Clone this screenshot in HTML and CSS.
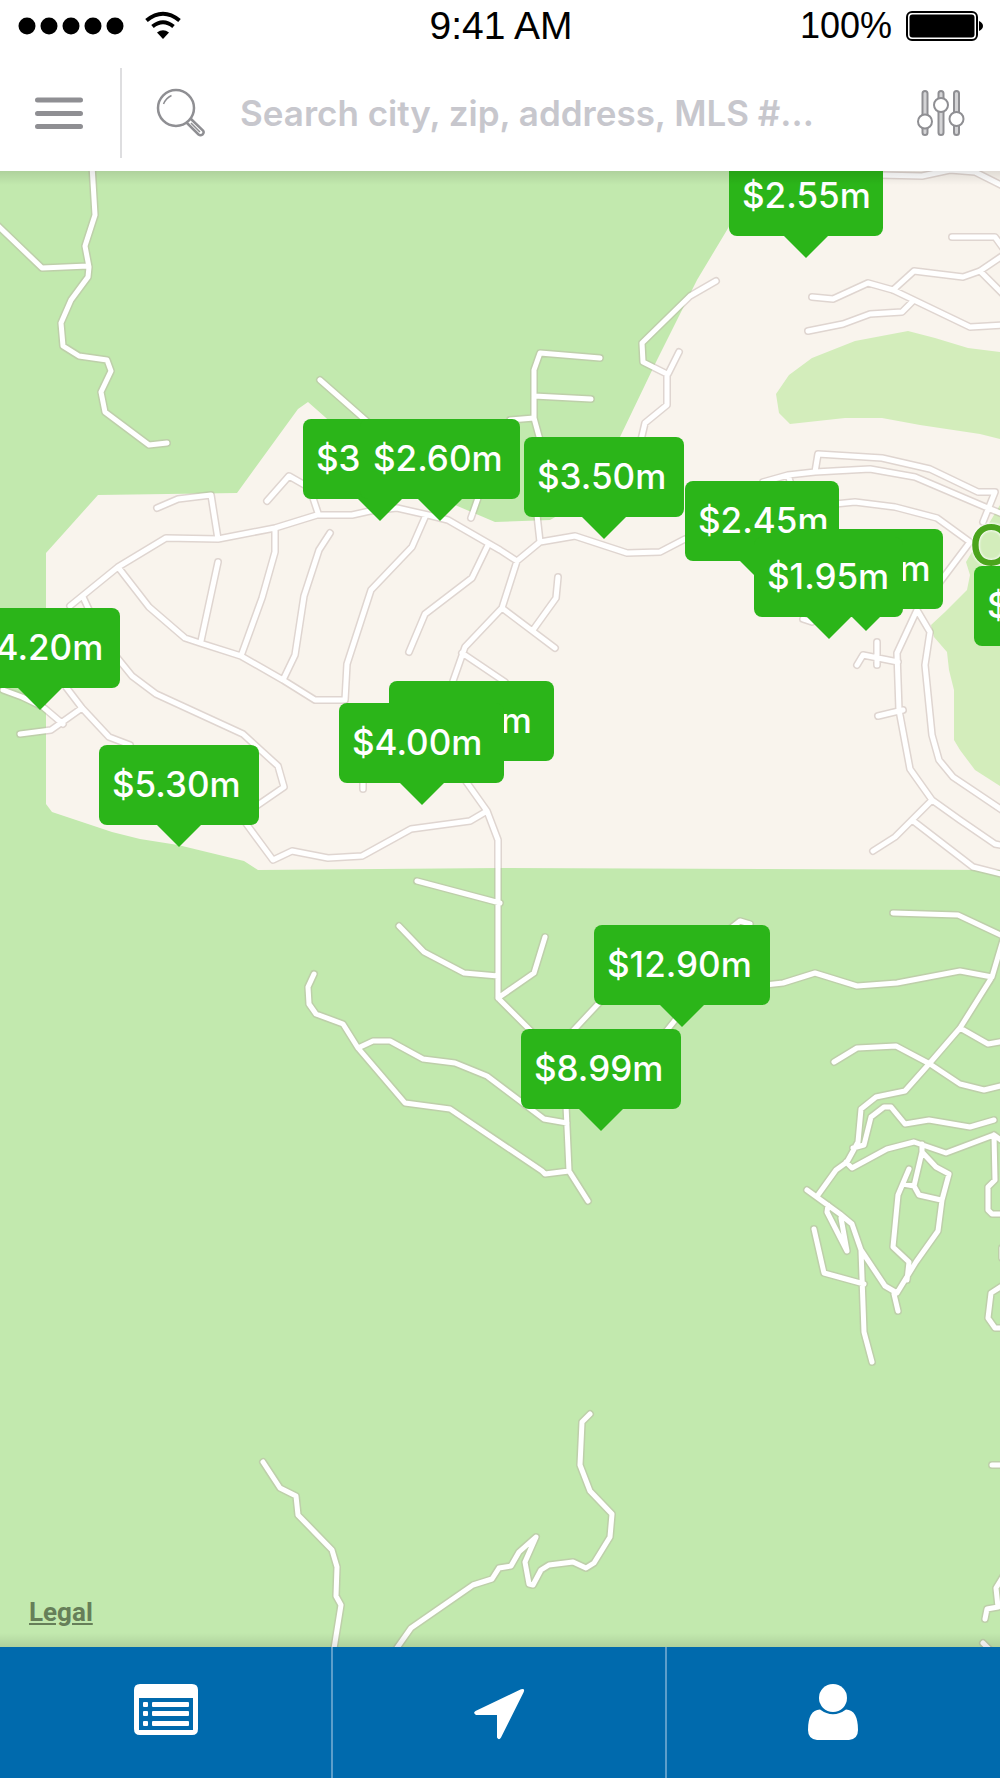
FILE: index.html
```html
<!DOCTYPE html>
<html lang="en">
<head>
    <meta charset="UTF-8">
    <meta name="viewport" content="width=device-width, initial-scale=1.0">
    <title>Map Search</title>
    <link rel="stylesheet" href="styles.css">
</head>
<body>
    <header class="header">
        <!-- Status Bar -->
        <div class="status">
            <div class="status-left">
                <svg width="106" height="18" viewBox="0 0 106 18">
                    <circle cx="9" cy="9" r="8.5"/>
                    <circle cx="31" cy="9" r="8.5"/>
                    <circle cx="53" cy="9" r="8.5"/>
                    <circle cx="75" cy="9" r="8.5"/>
                    <circle cx="97" cy="9" r="8.5"/>
                </svg>
                <svg width="38" height="30" viewBox="0 0 38 30">
                    <path d="M2.500 9.500Q19 -4 35.500 9.500" fill="none" stroke="#000" stroke-width="4"/>
                    <path d="M8.500 15.500Q19 7 29.500 15.500" fill="none" stroke="#000" stroke-width="4"/>
                    <path d="M13 21.500Q19 17 25 21.500L19 28Z"/>
                </svg>
            </div>
            <div class="time">9:41 AM</div>
            <div class="status-right">
                <span>100%</span>
                <svg width="78" height="30" viewBox="0 0 78 30">
                    <rect x="1" y="1" width="70" height="28" rx="5" fill="none" stroke="#000" stroke-width="2"/>
                    <rect x="3.500" y="3.500" width="65" height="23" rx="3"/>
                    <path d="M73 10Q77 12 77 15T73 20Z"/>
                </svg>
            </div>
        </div>

        <!-- Search Bar -->
        <form class="search">
            <button type="button" class="menu" aria-label="Menu">
                <svg width="48" height="32" viewBox="0 0 48 32">
                    <path d="M2.500 3H45.500M2.500 16.500H45.500M2.500 29.500H45.500" stroke="#8f8f93" stroke-width="5" stroke-linecap="round"/>
                </svg>
            </button>
            <label for="searchInput" class="search-label" aria-label="Search">
                <svg width="50" height="50" viewBox="0 0 50 50" fill="none" stroke="#8f8f93" stroke-width="2.500">
                    <circle cx="20" cy="20" r="18"/>
                    <path d="M7.500 16Q10 10 15.500 7.500" stroke-width="1.500"/>
                    <path d="M30.500 34.500L42.500 46.500Q44.500 48 46.500 46.500Q48.500 44.500 47 42.500L35 31"/>
                    <path d="M35 35L44 44" stroke-width="1.500"/>
                </svg>
            </label>
            <input type="text" id="searchInput" name="q" placeholder="Search city, zip, address, MLS #...">
            <button type="button" class="filter" aria-label="Filters">
                <svg width="50" height="48" viewBox="0 0 50 48" fill="#d4d4d6" stroke="#8f8f93" stroke-width="2">
                    <rect x="6.500" y="2" width="5" height="44" rx="2.500"/>
                    <rect x="22.500" y="2" width="5" height="44" rx="2.500"/>
                    <rect x="38" y="2" width="5" height="44" rx="2.500"/>
                    <g fill="#fff">
                        <circle cx="9" cy="32.500" r="7"/>
                        <circle cx="25" cy="16" r="7"/>
                        <circle cx="40.500" cy="30" r="7"/>
                    </g>
                </svg>
            </button>
        </form>
    </header>

    <!-- Map -->
    <main class="map">
        <svg class="map-art" viewBox="0 171 1000 1476" preserveAspectRatio="xMinYMin slice">
            <defs>
                <path id="roads" d="M92 165L95 215 85 246 89 267 88 277 71 300 61 323 63 346 79 356 107 360 111 371 101 392 105 412 149 445 167 443
                    M-5 223L42 268 88 266 M320 380L370 424
                    M157 508L178 499 211 495 218 539 M267 501L289 476 310 488
                    M70 606L118 567 166 538 218 539 275 528 317 515 352 515 370 511 397 508 428 515 448 520 500 550 517 561 540 542 575 536 627 553 660 552 685 539
                    M763 482L788 475 815 472 870 469 915 477 983 506 1005 515
                    M313 498L318 513 M478 498L471 518
                    M118 567L149 607 185 638 200 643 241 656 283 680 315 700 345 700 347 664 371 590 412 547 426 515
                    M275 528L275 552 262 598 241 656 M218 562L201 641
                    M330 533L319 550 304 596 295 655 283 680
                    M488 545L472 578 425 614 409 652
                    M83 597L90 612 M115 655L132 676 156 694 243 734 278 766 284 787 255 807
                    M245 822L273 860 292 851 328 858 362 856 411 829 470 821 487 811
                    M465 780L487 811 498 840 498 998 534 1034
                    M3 690L22 697 43 707 63 724 M20 734L51 730 82 708
                    M66 687L82 708 109 737 130 745
                    M517 561L502 608 465 647 452 684 M502 608L555 648 M533 630L556 598 558 577
                    M462 653L505 682 M363 780L363 789
                    M537 515L540 542 M600 358L540 353 534 370 534 418 540 440 M534 396L591 399 M534 418L510 420
                    M716 281L690 296 642 343 643 362 667 374 667 405 645 423 641 440 M679 352L668 374
                    M880 175L922 176 950 170 975 172 1005 187
                    M952 237L995 237 1003 248
                    M812 297L833 299 868 283 893 290 970 327 1005 325
                    M893 290L914 271 963 277 980 271 1005 254 M980 271L1005 296
                    M808 331L843 324 870 314 902 312 912 302
                    M815 472L818 454 882 458 930 469 978 492 995 492 983 522
                    M788 475L791 484
                    M835 504L855 502 895 507 937 518 970 542 940 582
                    M917 610L930 632 925 665 932 735 939 760 953 777 1005 812
                    M917 610L897 653 899 710 910 769 932 800 960 820 995 844 1005 846
                    M932 800L895 837 873 851 M912 820L973 867 1005 875
                    M877 642L877 665 M857 665L863 655 898 662 M878 716L903 710 M803 619L812 622
                    M417 881L500 903 M399 926L424 952 464 973 498 976 M498 998L534 973 545 937
                    M314 974L308 987 309 1004 316 1014 343 1024 358 1048 405 1103 450 1109 542 1171 545 1174 569 1171
                    M358 1048L373 1041 390 1041 423 1059 455 1063 487 1076 544 1119 567 1123
                    M566 1105L569 1171 588 1201
                    M600 1002L570 1034 M680 1014L664 1034 M731 928L740 921 750 924
                    M765 985L783 983 815 973 857 986 897 983 960 971 992 977
                    M893 913L958 915 1005 937
                    M1003 940L992 977 960 1028 929 1064 905 1091 876 1097 861 1109 858 1142 847 1162 836 1170 818 1195
                    M960 1028L988 1044 1005 1041
                    M834 1062L857 1048 896 1046 930 1064 960 1084 984 1090 1005 1085
                    M853 1148L864 1145 871 1117 884 1107 891 1107 905 1124 929 1120 970 1127 994 1120
                    M846 1162L852 1168 887 1149 914 1142 946 1153 994 1135 995 1180 988 1187 988 1210 992 1214 1005 1214 M994 1135L1005 1143
                    M807 1190L840 1214 852 1224 861 1250 885 1286 897 1293 916 1262 938 1231 942 1200 949 1174 936 1167 922 1152 914 1186 919 1195 941 1200
                    M922 1144L922 1152 M914 1186L903 1184
                    M909 1169L898 1195 893 1247 909 1262 907 1280
                    M828 1205L827 1212 847 1251 841 1218
                    M814 1229L824 1273 864 1284 M861 1250L864 1332 872 1362 M894 1294L898 1311
                    M1005 1284L991 1293 988 1318 995 1328 1005 1328
                    M263 1462L280 1488 296 1496 298 1515 332 1550 337 1567 336 1596 341 1605 333 1655
                    M590 1414L582 1422 580 1465 590 1491 612 1514 610 1537 594 1563 586 1568 573 1562 549 1565 541 1570 533 1585 529 1584 525 1562 536 1537 519 1552 511 1566 499 1568 492 1579 473 1585 411 1628 392 1655
                    M992 1465L1005 1465 M1004 1575L996 1588 998 1607 987 1609 985 1619 M983 1643L990 1650 M1002 1248L1002 1258"/>
            </defs>
            <rect y="171" width="1000" height="1476" fill="#c2e9ae"/>
            <path fill="#f9f4ed" d="M98 495L237 493 298 409 308 402 325 417 360 450 455 505 495 522 550 520 585 500 620 437 657 360 697 280 727 230 760 171H1000V870L500 868 258 870 244 861 178 845 140 839 112 832 52 812 46 804V553Z"/>
            <path fill="#d3edbb" d="M776 394L789 375 812 358 855 341 908 331 935 338 968 348 1000 352V439L980 434 920 425 882 418H845L790 424 779 413Z"/>
            <path fill="#d3edbb" d="M1000 505L985 530 966 562 970 575 967 590 945 612 931 625 934 637 947 652 949 670 954 690V740L960 750 975 770 1000 786Z"/>
            <use href="#roads" class="road-edge"/>
            <use href="#roads" class="road"/>
        </svg>

        <span class="place">C</span>

        <button type="button" class="pin pin-1">$2.55m</button>
        <button type="button" class="pin pin-2">$3.15m</button>
        <button type="button" class="pin pin-3">$2.60m</button>
        <button type="button" class="pin pin-4">$3.50m</button>
        <button type="button" class="pin pin-5">$2.45m</button>
        <button type="button" class="pin pin-6">$2.35m</button>
        <button type="button" class="pin pin-7">$1.95m</button>
        <button type="button" class="pin pin-8">$4.20m</button>
        <button type="button" class="pin pin-9">$4.50m</button>
        <button type="button" class="pin pin-10">$4.00m</button>
        <button type="button" class="pin pin-11">$5.30m</button>
        <button type="button" class="pin pin-12">$12.90m</button>
        <button type="button" class="pin pin-13">$8.99m</button>
        <button type="button" class="pin pin-14">$2.95m</button>

        <a href="#" class="legal">Legal</a>
    </main>

    <!-- Bottom Tabs -->
    <nav class="tabs">
        <button type="button" aria-label="List">
            <svg width="64" height="57" viewBox="0 0 64 57" fill="#fff">
                <path fill-rule="evenodd" d="M6 0H58Q64 0 64 6V45Q64 51 58 51H6Q0 51 0 45V6Q0 0 6 0ZM5 14V46H59V14Z"/>
                <rect x="9" y="18" width="5" height="5" rx="1"/>
                <rect x="9" y="27" width="5" height="5" rx="1"/>
                <rect x="9" y="37" width="5" height="5" rx="1"/>
                <rect x="18" y="18" width="37" height="5" rx="1"/>
                <rect x="18" y="27" width="37" height="5" rx="1"/>
                <rect x="18" y="37" width="37" height="5" rx="1"/>
            </svg>
        </button>
        <button type="button" aria-label="Nearby">
            <svg width="52" height="57" viewBox="0 0 52 57" fill="#fff">
                <path d="M48 5.300Q52.500 4 50.500 8.500L28 53.500Q26 57 24 53.500V31H3Q-.5 29 2.500 27Z"/>
            </svg>
        </button>
        <button type="button" aria-label="Profile">
            <svg width="52" height="57" viewBox="0 0 52 57" fill="#fff">
                <circle cx="26" cy="14" r="14"/>
                <path d="M13 25.500Q26 35 39 25.500Q51 26 51 46Q51 55 42 56H10Q1 55 1 46Q1 26 13 25.500Z"/>
            </svg>
        </button>
    </nav>
</body>
</html>
```
FILE: styles.css
```css
* {
    box-sizing: border-box;
}

body {
    font-family: Inter, Arial, sans-serif;
    margin: 0;
    min-height: 100vh;
    display: flex;
    flex-direction: column;
    background: #fff;
}

button {
    padding: 0;
    border: none;
    background: none;
    font-family: inherit;
    cursor: pointer;
}

svg {
    display: block;
}

.status {
    display: grid;
    grid-template-columns: 1fr auto 1fr;
    align-items: center;
    height: 52px;
    padding: 0 16px 0 18px;
    font-family: "Liberation Sans", Arial, sans-serif;
    font-size: 36px;
    color: #000;
}

.status-left {
    display: flex;
    align-items: center;
    gap: 20px;
}

.status-right {
    display: flex;
    align-items: center;
    justify-content: flex-end;
    gap: 14px;
}

.time {
    font-size: 39px;
}

.search {
    display: flex;
    align-items: center;
    height: 119px;
    padding: 2px 34px 0 0;
}

.menu {
    display: flex;
    align-items: center;
    justify-content: center;
    width: 122px;
    height: 90px;
    padding-right: 2px;
    border-right: 2px solid #dedee0;
}

.search-label {
    padding: 0 34px;
}

.search input {
    flex: 1;
    min-width: 0;
    padding: 0;
    border: none;
    outline: none;
    background: none;
    font-family: inherit;
    font-size: 35px;
    font-weight: 600;
    color: #555;
}

.search input::placeholder {
    color: #c7c7cd;
    opacity: 1;
}

.map {
    flex: 1;
    min-height: 1476px;
    position: relative;
    overflow: hidden;
    background: #c2e9ae;
}

/* shadow from the bars above and below */
.map::after {
    content: "";
    position: absolute;
    inset: 0;
    pointer-events: none;
    background:
        linear-gradient(rgba(0, 0, 0, 0.1), rgba(0, 0, 0, 0)) top / 100% 14px no-repeat,
        linear-gradient(rgba(0, 0, 0, 0), rgba(0, 0, 0, 0.1)) bottom / 100% 14px no-repeat;
}

.map-art {
    position: absolute;
    width: 100%;
    height: 100%;
}

.road-edge,
.road {
    fill: none;
    stroke-linecap: round;
    stroke-linejoin: round;
}

.road-edge {
    stroke: #b8a8a4;
    stroke-width: 8;
    opacity: 0.4;
}

.road {
    stroke: #fff;
    stroke-width: 5;
}

.place {
    position: absolute;
    left: 969px;
    top: 340px;
    font-size: 58px;
    line-height: 68px;
    font-weight: 500;
    color: #4aa41c;
    text-shadow: 0 0 3px #fff, 0 0 3px #fff;
}

.pin {
    position: absolute;
    width: 160px;
    height: 80px;
    padding: 0 0 2px 13px;
    border-radius: 8px;
    background: #2bb519;
    color: #fff;
    font-size: 35px;
    font-weight: 500;
    text-align: left;
    white-space: nowrap;
}

.pin::after {
    content: "";
    position: absolute;
    top: 100%;
    left: 50%;
    margin-left: -22px;
    border: 22px solid transparent;
    border-top-color: #2bb519;
    border-bottom: none;
}

.pin-1 { left: 729px; top: -15px; width: 154px; }
.pin-2 { left: 303px; top: 248px; width: 154px; }
.pin-3 { left: 360px; top: 248px; }
.pin-4 { left: 524px; top: 266px; }
.pin-5 { left: 685px; top: 310px; width: 154px; }
.pin-6 { left: 789px; top: 358px; width: 154px; }
.pin-7 { left: 754px; top: 366px; width: 149px; }
.pin-8 { left: -40px; top: 437px; }
.pin-9 { left: 389px; top: 510px; width: 165px; }
.pin-10 { left: 339px; top: 532px; width: 165px; }
.pin-11 { left: 99px; top: 574px; }
.pin-12 { left: 594px; top: 754px; width: 176px; }
.pin-13 { left: 521px; top: 858px; }
.pin-14 { left: 974px; top: 395px; }

.legal {
    position: absolute;
    left: 29px;
    bottom: 19px;
    font-family: Roboto, Arial, sans-serif;
    font-size: 26px;
    line-height: 32px;
    font-weight: 700;
    color: #667f59;
}

.tabs {
    display: grid;
    grid-template-columns: repeat(3, 1fr);
    height: 131px;
    background: #006aad;
}

.tabs button {
    display: flex;
    align-items: center;
    justify-content: center;
    border-right: 2px solid #5c9ecb;
}

.tabs button:last-child {
    border-right: none;
}
```
